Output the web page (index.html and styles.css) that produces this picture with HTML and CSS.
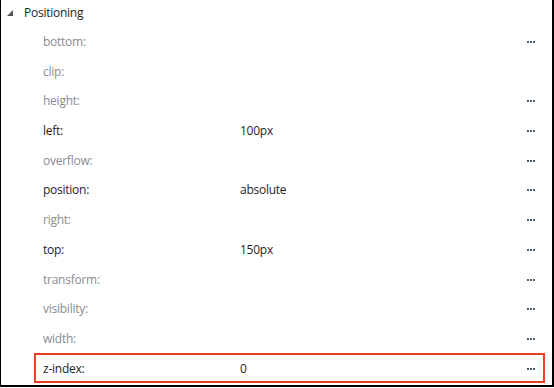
FILE: index.html
```html
<!DOCTYPE html>
<html>
<head>
<meta charset="utf-8">
<link rel="stylesheet" href="styles.css">
</head>
<body>
<div class="panel">
  <div class="header">
    <span class="tri"></span>
    <span class="title">Positioning</span>
  </div>
  <div class="rows">
    <div class="row unset"><span class="label">bottom:</span><span class="value"></span><span class="dots"><i></i><i></i><i></i></span></div>
    <div class="row unset"><span class="label">clip:</span><span class="value"></span></div>
    <div class="row unset"><span class="label">height:</span><span class="value"></span><span class="dots"><i></i><i></i><i></i></span></div>
    <div class="row"><span class="label">left:</span><span class="value">100px</span><span class="dots"><i></i><i></i><i></i></span></div>
    <div class="row unset"><span class="label">overflow:</span><span class="value"></span><span class="dots"><i></i><i></i><i></i></span></div>
    <div class="row"><span class="label">position:</span><span class="value">absolute</span><span class="dots"><i></i><i></i><i></i></span></div>
    <div class="row unset"><span class="label">right:</span><span class="value"></span><span class="dots"><i></i><i></i><i></i></span></div>
    <div class="row"><span class="label">top:</span><span class="value">150px</span><span class="dots"><i></i><i></i><i></i></span></div>
    <div class="row unset"><span class="label">transform:</span><span class="value"></span><span class="dots"><i></i><i></i><i></i></span></div>
    <div class="row unset"><span class="label">visibility:</span><span class="value"></span><span class="dots"><i></i><i></i><i></i></span></div>
    <div class="row unset"><span class="label">width:</span><span class="value"></span><span class="dots"><i></i><i></i><i></i></span></div>
    <div class="row selected"><span class="label">z-index:</span><span class="value">0</span><span class="dots"><i></i><i></i><i></i></span></div>
  </div>
</div>
</body>
</html>
```
FILE: styles.css
```css
html, body {
  margin: 0;
  padding: 0;
  background: #ffffff;
}
body {
  width: 554px;
  height: 388px;
  overflow: hidden;
  font-family: "Open Sans", "Noto Sans", sans-serif;
  font-size: 12px;
  letter-spacing: -0.25px;
  color: #1e1e1e;
}
.panel {
  box-sizing: border-box;
  width: 554px;
  height: 387px;
  border-left: 1px solid #000;
  border-right: 2px solid #000;
  border-bottom: 2px solid #000;
  background: #fff;
}
.header {
  height: 26.7px;
  display: flex;
  align-items: center;
  padding-left: 6px;
}
.tri {
  width: 0;
  height: 0;
  border-left: 6px solid transparent;
  border-bottom: 6px solid #555;
  margin-top: -1px;
}
.title {
  margin-left: 11px;
  color: #1e1e1e;
  margin-top: -1px;
}
.rows {
  display: flex;
  flex-direction: column;
  padding-left: 33px;
}
.row {
  box-sizing: border-box;
  width: 511px;
  height: 29.7px;
  border: 2px solid transparent;
  display: flex;
  align-items: center;
  padding-left: 7px;
  position: relative;
}
.row.selected {
  border-color: #e5421d;
}
.label {
  width: 197px;
  flex: none;
  color: #1e1e1e;
}
.unset .label {
  color: #8b8b93;
}
.value {
  flex: 1;
}
.dots {
  display: flex;
  gap: 1px;
  margin-right: 8px;
  margin-top: 1px;
}
.dots i {
  display: block;
  width: 2px;
  height: 2px;
  background: #4a5a66;
}
```
